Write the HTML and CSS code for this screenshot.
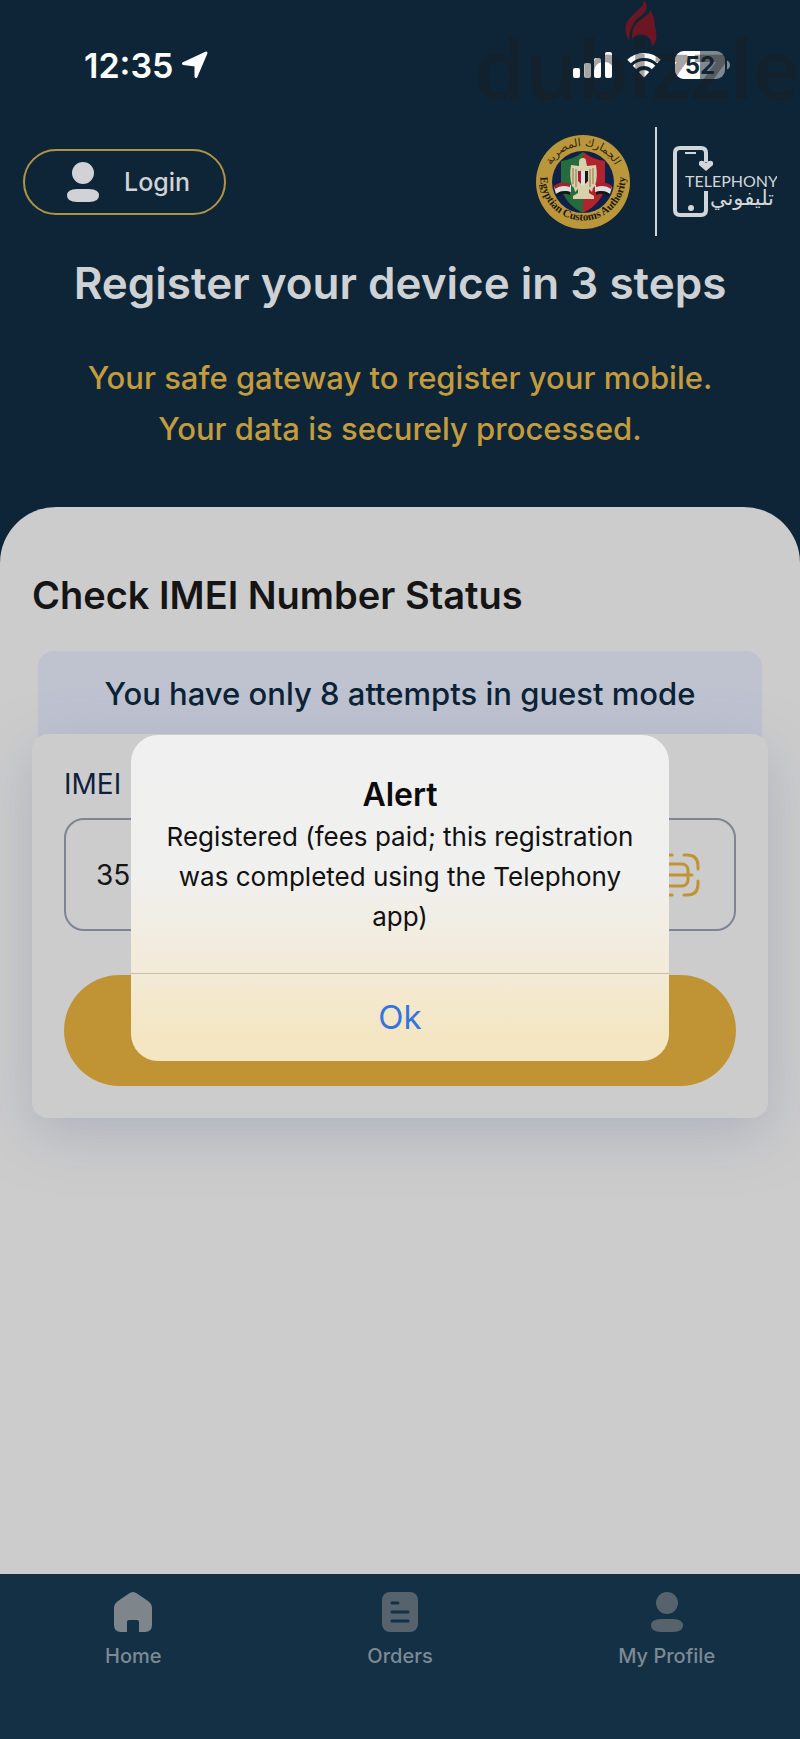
FILE: index.html
```
<!DOCTYPE html>
<html lang="en">
<head>
  <meta charset="UTF-8">
  <title>Telephony - Register your device</title>
  <meta name="viewport" content="width=device-width, initial-scale=1.0">
  <link rel="stylesheet" href="styles.css">
</head>
<body>
  <div class="screen">
    <header class="header">
      <div class="status-bar">
        <div class="status-left">
          <span class="time">12:35</span>
          <svg width="28" height="28" viewBox="0 0 28 28"><path d="M25 2 15 25.500V14.500Q15 14 14.500 14L2.500 12.500Z" fill="#fff" stroke="#fff" stroke-width="3" stroke-linejoin="round"/></svg>
        </div>
        <div class="status-right">
          <svg width="40" height="26" viewBox="0 0 40 26" fill="#fff">
            <rect x="0" y="16" width="7" height="10" rx="2"/>
            <rect x="11" y="11" width="7" height="15" rx="2"/>
            <rect x="21" y="6" width="7" height="20" rx="2"/>
            <rect x="32" y="0" width="7" height="26" rx="2"/>
          </svg>
          <svg width="34" height="26" viewBox="0 0 34 26" fill="none" stroke="#fff" stroke-width="5">
            <path d="M2 9.500a21.500 21.500 0 0 1 30 0"/>
            <path d="M7.500 15.500a13.500 13.500 0 0 1 19 0"/>
            <path d="M17 25.500 11.800 20a7.500 7.500 0 0 1 10.400 0Z" fill="#fff" stroke="none"/>
          </svg>
          <svg width="55" height="28" viewBox="0 0 55 28">
            <rect width="50" height="28" rx="9" fill="#7d8891"/>
            <path d="M9 0H25V28H9A9 9 0 0 1 0 19V9A9 9 0 0 1 9 0Z" fill="#fff"/>
            <path d="M52 9.500q3 1.500 3 4.500t-3 4.500Z" fill="#7d8891"/>
            <text x="25" y="22.500" class="battery-text">52</text>
          </svg>
        </div>
      </div>

      <div class="brand-row">
        <button class="login" type="button">
          <svg width="32" height="40" viewBox="0 0 32 40" fill="currentColor"><circle cx="16" cy="11" r="11"/><path d="M10 27H22Q32 27 32 33.500T22 40H10Q0 40 0 33.500T10 27Z"/></svg>
          Login
        </button>
        <div class="logos">
          <!-- customs authority emblem -->
          <svg width="94" height="94" viewBox="0 0 94 94">
            <defs>
              <path id="arcTop" d="M11 47A36 36 0 0 1 83 47"/>
              <path id="arcBottom" d="M4.500 43A42.500 42.500 0 1 0 89.500 43"/>
            </defs>
            <circle cx="47" cy="47" r="47" fill="#bb973b"/>
            <circle cx="47" cy="47" r="31" fill="#0f2148"/>
            <path d="M47 17Q36 25 25 26V50Q27 68 47 78Z" fill="#256b3c"/>
            <path d="M47 17Q58 25 69 26V50Q67 68 47 78Z" fill="#b3232d"/>
            <path d="M18 52Q25 46 35 50V57Q26 54 20 59Z" fill="#ddd"/>
            <path d="M18 51Q25 45 34 49V52Q25 49 19 54Z" fill="#a52030"/>
            <path d="M20 59Q27 54 34 57V60Q27 57 22 61Z" fill="#151515"/>
            <path d="M76 52Q69 46 59 50V57Q68 54 74 59Z" fill="#ddd"/>
            <path d="M76 51Q69 45 60 49V52Q69 49 75 54Z" fill="#a52030"/>
            <path d="M74 59Q67 54 60 57V60Q67 57 72 61Z" fill="#151515"/>
            <path d="M47 23Q43 23 43 27L43 31 35 30Q33 42 36 51L38 53 39 57 42 54 42 58 37 61V64H58V61L53 58V54L56 57 57 53 59 51Q62 42 60 30L51 31 50 26Q50 23 47 23Z" fill="#d8cfac"/>
            <path d="M37 33V49M40 34V52M54 34V52M57 33V49" stroke="#8d7640" stroke-width="1"/>
            <path d="M42 36H52V46L47 51 42 46Z" fill="#ddd"/>
            <path d="M42 36H45V49L42 46Z" fill="#a52030"/>
            <path d="M49 36H52V46L49 49Z" fill="#171717"/>
            <text class="emblem-ar"><textPath href="#arcTop" startOffset="50%">الجمارك المصرية</textPath></text>
            <text class="emblem-en"><textPath href="#arcBottom" startOffset="50%">Egyptian Customs Authority</textPath></text>
          </svg>
          <span class="divider"></span>
          <!-- telephony logo -->
          <svg width="104" height="74" viewBox="0 0 104 74">
            <path d="M33 17V8Q33 3 28 3H7Q2 3 2 8V65Q2 70 7 70H28Q33 70 33 65V46" fill="none" stroke="#d3d6d9" stroke-width="4"/>
            <path d="M12 8H23" stroke="#d3d6d9" stroke-width="2"/>
            <circle cx="18" cy="63" r="3" fill="#d3d6d9"/>
            <path d="M26 17Q29 14 33 18Q37 14 40 17V20L33 26 26 20Z" fill="#d3d6d9"/>
            <text x="12" y="42" class="logo-en">TELEPHONY</text>
            <text x="69" y="60" class="logo-ar">تليفوني</text>
          </svg>
        </div>
      </div>

      <h1 class="headline">Register your device in 3 steps</h1>
      <p class="tagline">Your safe gateway to register your mobile.<br>Your data is securely processed.</p>

      <div class="watermark">
        <svg width="34" height="48" viewBox="0 0 34 48" fill="#6b1622"><path d="M5 41Q-2 28 5 19L15 9Q20 5 20 0Q24 5 22 10Q20 14 13 19Q5 27 5 41Z"/><path d="M8 39Q7 27 15 21L24 14Q27 11 26 9Q31 18 31 27Q35 39 28 47Q28 38 21 35Q12 33 8 39Z"/></svg>
        <span>dubizzle</span>
      </div>
    </header>

    <main class="sheet">
      <h2 class="section-title">Check IMEI Number Status</h2>
      <p class="attempts">You have only 8 attempts in guest mode</p>
      <form class="card">
        <label class="label" for="imei">IMEI</label>
        <div class="field">
          <input id="imei" type="text" value="35">
          <button class="scan" type="button" aria-label="Scan">
            <svg width="44" height="44" viewBox="0 0 44 44" fill="none" stroke="currentColor" stroke-width="3" stroke-linecap="round"><path d="M2 16V13Q2 2 13 2H16M28 2H31Q42 2 42 13V16M42 28V31Q42 42 31 42H28M16 42H13Q2 42 2 31V28M6 22H36"/><rect x="8" y="11" width="24" height="22" rx="6"/></svg>
          </button>
        </div>
        <button class="submit" type="button" aria-label="Check"></button>
      </form>
    </main>

    <nav class="tabs">
      <a class="tab active" href="#">
        <svg width="40" height="40" viewBox="0 0 40 40" fill="currentColor"><path d="M16 1.500Q20-1.500 24 1.500L35 9Q39 12 39 16V33Q39 40 32 40H26V30Q26 28 24 28H16Q14 28 14 30V40H8Q1 40 1 33V16Q1 12 5 9Z"/></svg>
        Home
      </a>
      <a class="tab" href="#">
        <svg width="40" height="40" viewBox="0 0 40 40"><rect x="2" width="36" height="40" rx="8" fill="currentColor"/><path d="M12 11H18M12 20H28M12 29H28" stroke="#133044" stroke-width="3" stroke-linecap="round"/></svg>
        Orders
      </a>
      <a class="tab" href="#">
        <svg width="40" height="40" viewBox="0 0 40 40" fill="currentColor"><circle cx="20" cy="11" r="11"/><path d="M14 27H26Q36 27 36 33.500T26 40H14Q4 40 4 33.500T14 27Z"/></svg>
        My Profile
      </a>
    </nav>

    <div class="overlay">
      <div class="alert" role="alertdialog" aria-labelledby="alertTitle">
        <div class="alert-body">
          <h3 id="alertTitle">Alert</h3>
          <p>Registered (fees paid; this registration was completed using the Telephony app)</p>
        </div>
        <button class="alert-ok" type="button">Ok</button>
      </div>
    </div>
  </div>
</body>
</html>
```
FILE: styles.css
```
* {
  margin: 0; padding: 0; box-sizing: border-box;
}
body {
  background: #0d2537;
  font-family: Inter, "Liberation Sans", sans-serif;
}
button, input {
  font-family: inherit; border: none; background: none;
}
svg { display: block; flex: none; }
.screen {
  position: relative; min-height: 100vh;
  display: flex; flex-direction: column;
}

/* Header */
.header { position: relative; padding-bottom: 53px; }
.status-bar {
  display: flex; justify-content: space-between;
  height: 127px; padding: 44px 70px 0 84px;
}
.status-left, .status-right { display: flex; align-items: center; height: 42px; }
.status-left { gap: 8px; }
.status-right { gap: 14px; }
.time { color: #fff; font-size: 34px; font-weight: 600; }
.battery-text {
  font-size: 24px; font-weight: 700; fill: #132638; text-anchor: middle;
}
.brand-row {
  display: flex; justify-content: space-between; align-items: center;
  padding: 0 23px;
}
.login {
  display: flex; align-items: center; gap: 25px;
  height: 66px; padding: 0 34px 0 42px;
  border: 2px solid #b09445; border-radius: 33px;
  color: #d0d2d5; font-size: 25px; font-weight: 500;
}
.logos { display: flex; align-items: center; }
.divider { width: 2px; height: 109px; margin: 0 16px 0 25px; background: #d3d6d9; }
.emblem-ar {
  font-family: "DejaVu Sans", sans-serif; font-size: 11px;
  fill: #2b2614; text-anchor: middle;
}
.emblem-en {
  font-family: "Liberation Serif", serif; font-size: 11px; font-weight: 700;
  fill: #1d1a10; text-anchor: middle;
}
.logo-en { font-family: Lato, sans-serif; font-size: 16px; fill: #d3d6d9; }
.logo-ar {
  font-family: "DejaVu Sans", sans-serif; font-size: 21px;
  fill: #d3d6d9; text-anchor: middle;
}
.headline {
  margin-top: 20px; line-height: 54px; text-align: center;
  color: #cfd2d5; font-size: 44px; font-weight: 600;
}
.tagline {
  margin-top: 42px; line-height: 51px; text-align: center;
  color: #c49c3e; font-size: 31px; font-weight: 500;
}
.watermark { position: absolute; top: 0; right: 0; width: 322px; height: 120px; }
.watermark svg { position: absolute; left: 146px; top: 0; }
.watermark span {
  position: absolute; right: 0; top: 11px;
  font-family: "Open Sans", sans-serif; font-size: 82px; font-weight: 600;
  color: rgba(28, 28, 28, 0.4);
}

/* Content sheet */
.sheet {
  flex: 1; padding: 64px 32px;
  background: #ccc; border-radius: 56px 56px 0 0;
}
.section-title { line-height: 48px; color: #151515; font-size: 38px; font-weight: 600; }
.attempts {
  margin: 32px 6px -16px; padding: 23px 0 36px;
  line-height: 40px; text-align: center;
  background: #bfc2cf; border-radius: 16px 16px 0 0;
  color: #0a2336; font-size: 31px; font-weight: 500;
}
.card {
  position: relative; padding: 32px;
  background: #ccc; border-radius: 16px;
  box-shadow: 0 16px 56px rgba(120, 128, 165, 0.34);
}
.label { display: block; line-height: 36px; color: #0f1f3c; font-size: 28px; }
.field {
  display: flex; align-items: center;
  height: 113px; margin-top: 16px; padding: 0 34px 0 30px;
  border: 2px solid #7e8493; border-radius: 20px;
}
.field input { flex: 1; min-width: 0; color: #151515; font-size: 28px; }
.scan { color: #c09434; }
.submit {
  display: block; width: 100%; height: 111px; margin-top: 44px;
  background: #c09434; border-radius: 56px;
}

/* Bottom tabs */
.tabs {
  display: flex; height: 165px; padding-top: 18px;
  background: #133044;
}
.tab {
  flex: 1; display: flex; flex-direction: column; align-items: center; gap: 12px;
  color: #7d8a94; font-size: 20px; line-height: 24px; font-weight: 500;
  text-decoration: none;
}
.tab svg { color: #56636c; }
.tab.active svg { color: #7e868b; }

/* Alert */
.overlay {
  position: absolute; inset: 0; padding: 56px 16px 0;
  display: flex; align-items: center; justify-content: center;
}
.alert {
  width: 100%; max-width: 538px; overflow: hidden;
  background: linear-gradient(#f0f0f0 0%, #f0f0ef 42%, #f2ebda 70%, #f4e6c2 92%);
  border-radius: 27px; text-align: center;
}
.alert-body { padding: 38px 32px 36px; }
.alert h3 { line-height: 44px; color: #0b0b0b; font-size: 32px; font-weight: 600; }
.alert p { line-height: 40px; color: #111; font-size: 26px; }
.alert-ok {
  display: block; width: 100%; height: 88px;
  border-top: 1px solid #c9c0a8; color: #3574e0; font-size: 33px;
}
```
